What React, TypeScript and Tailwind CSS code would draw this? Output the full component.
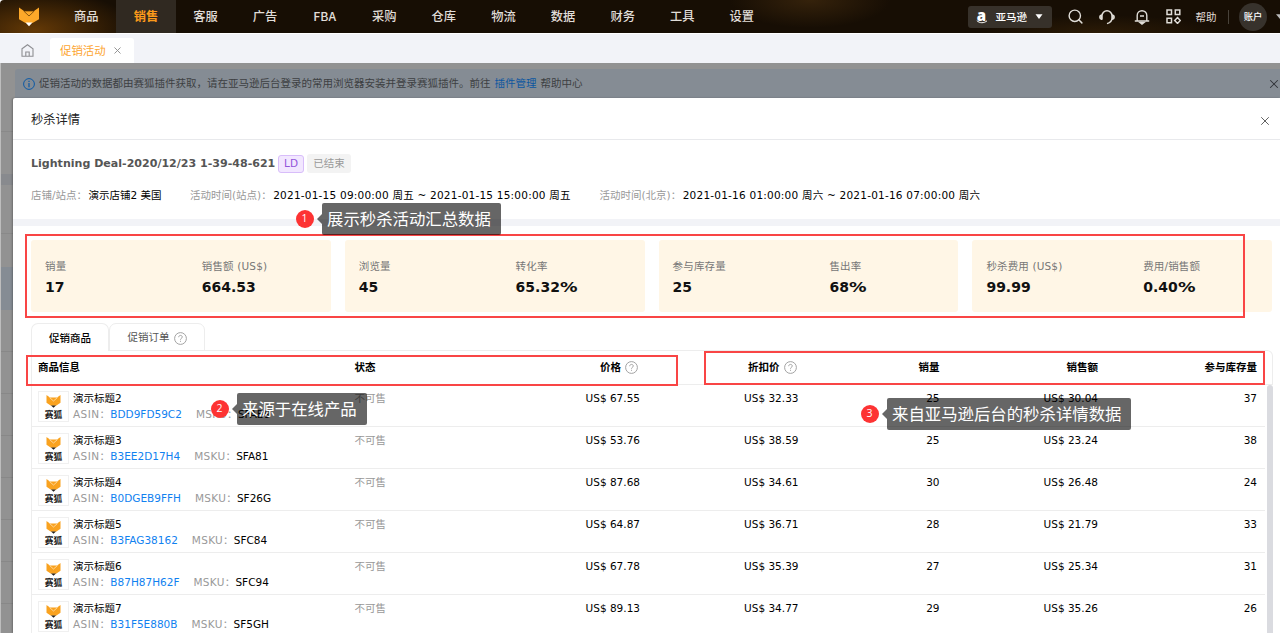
import { Search, X } from 'lucide-react'
import type { ReactNode } from 'react'

const NAV = ['商品', '销售', '客服', '广告', 'FBA', '采购', '仓库', '物流', '数据', '财务', '工具', '设置']

const CARDS = [
  [['销量', '17'], ['销售额 (US$)', '664.53']],
  [['浏览量', '45'], ['转化率', '65.32%']],
  [['参与库存量', '25'], ['售出率', '68%']],
  [['秒杀费用 (US$)', '99.99'], ['费用/销售额', '0.40%']],
]

const ROWS = [
  { title: '演示标题2', asin: 'BDD9FD59C2', msku: 'SFAB9', price: '67.55', deal: '32.33', sales: 25, amount: '30.04', stock: 37 },
  { title: '演示标题3', asin: 'B3EE2D17H4', msku: 'SFA81', price: '53.76', deal: '38.59', sales: 25, amount: '23.24', stock: 38 },
  { title: '演示标题4', asin: 'B0DGEB9FFH', msku: 'SF26G', price: '87.68', deal: '34.61', sales: 30, amount: '26.48', stock: 24 },
  { title: '演示标题5', asin: 'B3FAG38162', msku: 'SFC84', price: '64.87', deal: '36.71', sales: 28, amount: '21.79', stock: 33 },
  { title: '演示标题6', asin: 'B87H87H62F', msku: 'SFC94', price: '67.78', deal: '35.39', sales: 27, amount: '25.34', stock: 31 },
  { title: '演示标题7', asin: 'B31F5E880B', msku: 'SF5GH', price: '89.13', deal: '34.77', sales: 29, amount: '35.26', stock: 26 },
]

const COLS = 'grid grid-cols-[322.5px_100px_185.5px_158.5px_141px_158.5px_159px]'

function HelpIcon() {
  return (
    <svg width="13" height="13" viewBox="0 0 13 13" fill="none" stroke="#999" strokeWidth="0.9">
      <circle cx="6.5" cy="6.5" r="5.9" />
      <path d="M4.7 5.2c0-1.1.8-1.8 1.8-1.8s1.8.7 1.8 1.6c0 1.3-1.8 1.3-1.8 2.7" />
      <path d="M6.5 8.8v1" />
    </svg>
  )
}

function FoxLogo() {
  return (
    <svg width="20" height="20" viewBox="0 0 20 20" className="shrink-0">
      <path d="M0 .5 5 4h10l5-3.5v11.7L13.5 16h-7L0 12.2z" fill="#fda829" />
      <path d="M6.5 15.6h7L10 19.2z" fill="#fff" />
      <path d="M4.6 3.900 10 9l5.400-5.100" fill="none" stroke="#6b430a" strokeWidth="0.8" />
      <path d="M5 4.200h10" fill="none" stroke="#6b430a" strokeWidth="0.6" />
    </svg>
  )
}

function ProductThumb() {
  return (
    <div className="mt-[2px] flex h-[31px] w-[31px] shrink-0 flex-col items-center border border-[#f0f0f0]">
      <svg width="15" height="13" viewBox="0 0 15 13" className="mt-[3px] shrink-0">
        <path d="M.5 0 4 2.500h7L14.500 0v7.800L10 10.800H5L.5 7.800z" fill="#f9a21f" />
        <path d="M3.500 2.500 7.500 6l4-3.500" fill="none" stroke="#ffe8c4" strokeWidth="0.7" />
        <path d="M5 10.500h5l-2.500 2.300z" fill="#222" />
      </svg>
      <span className="mt-[2px] text-[8.7px] leading-[10px] font-bold text-[#222]">赛狐</span>
    </div>
  )
}

function TopBar() {
  return (
    <div className="flex h-[33px] items-center rounded-tl-[4px] bg-[#170e04] bg-[radial-gradient(ellipse_80px_28px_at_810px_0px,#35220b,transparent),radial-gradient(ellipse_100px_40px_at_35px_30px,#643906,transparent),radial-gradient(ellipse_120px_18px_at_1100px_33px,#2c1b06,transparent)] text-[#e0ddd8]">
      <div className="flex w-[56.500px] justify-center pl-[1px]">
        <FoxLogo />
      </div>
      <div className="flex h-full">
        {NAV.map((item) => (
          <div
            key={item}
            className={
              item === '销售'
                ? 'flex w-[59.6px] items-center justify-center bg-[#302921] text-[12.25px] font-bold text-[#fb9a1b]'
                : 'flex w-[59.6px] items-center justify-center text-[12.25px] font-medium'
            }
          >
            {item}
          </div>
        ))}
      </div>
      <div className="ml-auto flex h-full items-center text-[10.5px]">
        <div className="flex h-[22px] w-[84px] items-center rounded-[3px] bg-[#37312a] pl-[8px] font-medium text-white">
          <span className="relative w-[12px] text-center font-['Open_Sans'] text-[15px] leading-[12px] font-extrabold">
            <span className="relative -top-[2px]">a</span>
            <svg width="12" height="4" viewBox="0 0 12 4" className="absolute top-[9px] left-0" fill="none" stroke="#fff">
              <path d="M.8.6C3.6 3.4 8 3.4 11 .8" />
            </svg>
          </span>
          <span className="ml-[8px] w-[32px]">亚马逊</span>
          <svg width="8" height="5" viewBox="0 0 8 5" className="ml-[7px]">
            <path d="M.5.2h7L4 5z" fill="#fff" />
          </svg>
        </div>
        <Search size={17} strokeWidth={2} className="ml-[15px]" />
        <svg width="16" height="16" viewBox="0 0 16 16" className="ml-[15px]" fill="none" stroke="currentColor" strokeWidth="1.5">
          <path d="M3 10.500V6.700a5 5 0 0 1 10 0v2.500c0 2.700-2 4.500-5 5.400M2.500 6v4.200C1.300 10 .8 9.200.8 8.100S1.300 6.200 2.500 6zM13.500 6v4.200c1.200-.2 1.700-1 1.700-2.100S14.700 6.200 13.500 6z" />
        </svg>
        <svg width="16" height="16" viewBox="0 0 16 16" className="ml-[19px]" fill="none" stroke="currentColor" strokeWidth="1.4">
          <path d="M3.200 11.500V6.500a4.800 4.800 0 0 1 9.600 0v5M.8 12h14.400M6 7h4" />
          <path d="M6 13.500h4L8 15z" fill="currentColor" />
        </svg>
        <svg width="15" height="15" viewBox="0 0 15 15" className="ml-[16px]" fill="none" stroke="currentColor" strokeWidth="1.5">
          <path d="M1 1h4.500v4.500H1zM9.300 1h4.500v4.500H9.300zM1 9.300h4.500v4.500H1z" />
          <path d="M11.500 8.600l2.800 2.900-2.800 2.900-2.800-2.900z" />
        </svg>
        <span className="ml-[15px] w-[21px] whitespace-nowrap">帮助</span>
        <div className="ml-[11px] h-[14px] w-px bg-[#48423a]" />
        <div className="ml-[10.500px] flex h-[28px] w-[28px] items-center justify-center rounded-full bg-[#37322c] text-[9.300px] font-medium text-white">
          账户
        </div>
        <svg width="4" height="5" viewBox="0 0 4 5" className="ml-[9px]">
          <path d="M0 .2h4V5z" fill="#bbb" />
        </svg>
      </div>
    </div>
  )
}

function PageTabs() {
  return (
    <div className="flex h-[30px] items-end border-t border-white bg-[#f2f3f8] pl-[21px]">
      <svg width="13" height="13" viewBox="0 0 13 13" className="mb-[6px]" fill="none" stroke="#8e8e92" strokeWidth="1.100">
        <path d="M1 4.800 6.500.8 12 4.800v7.500H1z" />
        <path d="M4.800 12V8h3.400v4" />
      </svg>
      <div className="ml-[16px] flex h-[25px] w-[84px] items-center rounded-t-[3px] bg-white pl-[10px] text-[11.400px] text-[#fda530]">
        促销活动
        <X size={11} strokeWidth={2} className="ml-[6px] text-[#8c8c8c]" />
      </div>
    </div>
  )
}

function Backdrop() {
  return (
    <div className="absolute top-[68px] left-0 w-[13px]">
      <div className="h-px bg-[#898989]" />
      <div className="mt-[42px] h-[11px] bg-[#888a8e]" />
      <div className="mt-[48px] h-px bg-[#898989]" />
      <div className="mt-[33px] h-[43px] bg-[#858c94]" />
      <div className="mt-[41px] h-px bg-[#888]" />
      <div className="mt-[41px] h-px bg-[#888]" />
      <div className="mt-[41px] h-px bg-[#888]" />
      <div className="mt-[41px] h-px bg-[#888]" />
      <div className="mt-[41px] h-px bg-[#888]" />
      <div className="mt-[41px] h-px bg-[#888]" />
      <div className="mt-[41px] h-px bg-[#888]" />
    </div>
  )
}

function Notice() {
  return (
    <div className="ml-[15px] flex h-[29px] items-center rounded-tl-[3px] bg-[#858c94] pl-[8px] text-[10.500px] text-[#3d3f42]">
      <svg width="12" height="12" viewBox="0 0 12 12" fill="none" stroke="#0c59a5">
        <circle cx="6" cy="6" r="5.400" />
        <path d="M6 2.700v1.200M6 5v4.200" strokeWidth="1.200" />
      </svg>
      <span className="ml-[4px]">促销活动的数据都由赛狐插件获取，请在亚马逊后台登录的常用浏览器安装并登录赛狐插件。前往</span>
      <span className="ml-[4px] text-[#0c56a0]">插件管理</span>
      <span className="ml-[4px]">帮助中心</span>
      <X size={14} strokeWidth={1.800} className="-mr-[1px] ml-auto text-[#303338]" />
    </div>
  )
}

function Callout({ n, className, children }: { n: number; className: string; children: ReactNode }) {
  return (
    <div className={`absolute flex items-center ${className}`}>
      <div className="flex h-[18px] w-[18px] items-center justify-center rounded-full bg-[#fd3333] font-['Open_Sans'] text-[10.500px] text-white">
        {n}
      </div>
      <svg width="5" height="10" viewBox="0 0 5 10" className="ml-[3.500px]">
        <path d="M5 0v10L0 5z" fill="#000" fillOpacity="0.600" />
      </svg>
      <div className="flex h-[32px] items-center rounded-[2px] bg-black/60 pt-[3px] pr-[10px] pl-[5px] text-[16.400px] whitespace-nowrap text-white">
        {children}
      </div>
    </div>
  )
}

function DealInfo() {
  return (
    <div className="h-[79px] px-[18px] text-[10.500px]">
      <div className="flex items-center pt-[14px]">
        <span className="w-[247px] pt-[2px] text-[11.050px] font-bold whitespace-nowrap text-[#555]">Lightning Deal-2020/12/23 1-39-48-621</span>
        <span className="flex h-[18px] w-[26px] items-center justify-center rounded-[3px] border border-[#d8bdfa] bg-[#f2e7ff] text-[#9256da]">
          LD
        </span>
        <span className="ml-[3px] flex h-[19px] w-[44px] items-center justify-center rounded-[3px] bg-[#f3f3f3] pt-px text-[#999]">
          已结束
        </span>
      </div>
      <div className="mt-[14px] flex items-center leading-[17px] whitespace-nowrap text-black">
        <div className="w-[159px]"><span className="mr-[1.500px] text-[#999]">店铺/站点：</span>演示店铺2 美国</div>
        <div className="w-[409.500px]">
          <span className="mr-[1.500px] text-[#999]">活动时间(站点)：</span>
          <span className="tracking-[0.220px]">2021-01-15 09:00:00 周五 ~ 2021-01-15 15:00:00 周五</span>
        </div>
        <div>
          <span className="mr-[1.500px] text-[#999]">活动时间(北京)：</span>
          <span className="tracking-[0.220px]">2021-01-16 01:00:00 周六 ~ 2021-01-16 07:00:00 周六</span>
        </div>
      </div>
    </div>
  )
}

function DealTable() {
  return (
    <div className="flex-1 border-l border-[#ededed] text-[10.500px] text-black">
      <div className="flex h-[35px] items-center rounded-tr-[6px] border-t border-r border-b border-[#ededed]">
        <div className={`${COLS} font-bold`}>
          <span className="pl-[6px]">商品信息</span>
          <span>状态</span>
          <span className="flex items-center justify-end gap-[4px] pr-[2px]">价格<HelpIcon /></span>
          <span className="flex items-center justify-end gap-[4px] pr-[2px]">折扣价<HelpIcon /></span>
          <span className="text-right">销量</span>
          <span className="text-right">销售额</span>
          <span className="text-right">参与库存量</span>
        </div>
      </div>
      <div className="flex">
        <div className="w-[1233px]">
          {ROWS.map((row) => (
            <div key={row.title} className={`${COLS} h-[42px] border-b border-[#ededed] pt-[4px] leading-[18px]`}>
              <div className="flex pl-[6px] whitespace-nowrap">
                <ProductThumb />
                <div className="ml-[4px]">
                  <div>{row.title}</div>
                  <div className="-mt-[2px]">
                    <span className="tracking-[0.400px] text-[#999]">ASIN：</span>
                    <span className="text-[#1081f0]">{row.asin}</span>
                    <span className="ml-[14px] tracking-[0.300px] text-[#999]">MSKU：</span>
                    {row.msku}
                  </div>
                </div>
              </div>
              <span className="text-[#999]">不可售</span>
              <span className="text-right">US$ {row.price}</span>
              <span className="text-right">US$ {row.deal}</span>
              <span className="text-right">{row.sales}</span>
              <span className="text-right">US$ {row.amount}</span>
              <span className="text-right">{row.stock}</span>
            </div>
          ))}
        </div>
        <div className="ml-[1.500px] w-[6.500px] rounded-t-[3px] bg-[#dadbe0]" />
      </div>
    </div>
  )
}

export default function App() {
  return (
    <div className="relative h-[633px] w-[1280px] overflow-hidden bg-white font-['DejaVu_Sans','Noto_Sans_CJK_SC',sans-serif]">
      <div className="font-['Noto_Sans_CJK_SC',sans-serif]">
        <TopBar />
        <PageTabs />
      </div>

      <div className="relative h-[570px] bg-[#929292] pt-[6px]">
        <Backdrop />
        <Notice />
        <div className="relative ml-[13px] flex h-[535px] flex-col overflow-hidden rounded-tl-[2px] bg-white shadow-[-1px_0_2px_rgba(0,0,0,0.25)]">
          <div className="flex h-[42px] shrink-0 items-center justify-between border-b border-[#e8e9ec] pt-[3px] pr-[8px] pl-[18px] text-[12.250px] text-[#222]">
            秒杀详情
            <X size={14} strokeWidth={1.600} className="mt-[2px] text-[#555]" />
          </div>
          <DealInfo />
          <div className="h-[7px] shrink-0 bg-[#f2f3f7]" />

          {/* Summary cards */}
          <div className="mt-[14px] flex gap-[14px] px-[18px] pr-[8px]">
            {CARDS.map((card) => (
              <div key={card[0][0]} className="flex h-[72px] w-[299.800px] shrink-0 rounded-[3px] bg-[#fff6e6] pt-[18px] pl-[14px]">
                {card.map(([label, value]) => (
                  <div key={label} className="w-[156.800px] shrink-0 whitespace-nowrap">
                    <div className="text-[10.500px] leading-[16px] tracking-[0.150px] text-[#777]">{label}</div>
                    <div className="mt-[4px] text-[14px] leading-[18px] font-bold text-[#111]">
                      {value.replace('%', '')}
                      {value.endsWith('%') && <span className="inline-block origin-left scale-x-125">%</span>}
                    </div>
                  </div>
                ))}
              </div>
            ))}
          </div>

          {/* Tabs */}
          <div className="relative z-10 mt-[11px] -mb-px ml-[18px] flex h-[28px] shrink-0 text-[10.500px]">
            <div className="flex w-[78px] items-center justify-center rounded-t-[7px] border border-b-0 border-[#ededed] bg-white pt-[2px] font-medium text-black">
              促销商品
            </div>
            <div className="flex w-[96px] items-center justify-center gap-[4px] rounded-t-[7px] border border-[#ededed] pt-[2px] text-[#555]">
              促销订单<HelpIcon />
            </div>
          </div>
          <div className="mr-[8px] ml-[18px] flex min-h-0 flex-1">
            <DealTable />
          </div>
        </div>
      </div>

      {/* Left window edge */}
      <div className="absolute top-[63px] left-0 h-[570px] w-px bg-[#bdbdbd]" />

      {/* Highlight frames */}
      <div className="absolute top-[234px] left-[25px] h-[84px] w-[1220px] border-2 border-[#f94545]" />
      <div className="absolute top-[355px] left-[26px] h-[31px] w-[652px] border-2 border-[#f94545]" />
      <div className="absolute top-[351px] left-[704px] h-[34px] w-[561px] border-2 border-[#f94545]" />

      <Callout n={1} className="top-[203px] left-[295.500px]">展示秒杀活动汇总数据</Callout>
      <Callout n={2} className="top-[392.500px] left-[210.500px]">来源于在线产品</Callout>
      <Callout n={3} className="top-[398px] left-[860.500px]">来自亚马逊后台的秒杀详情数据</Callout>
    </div>
  )
}
